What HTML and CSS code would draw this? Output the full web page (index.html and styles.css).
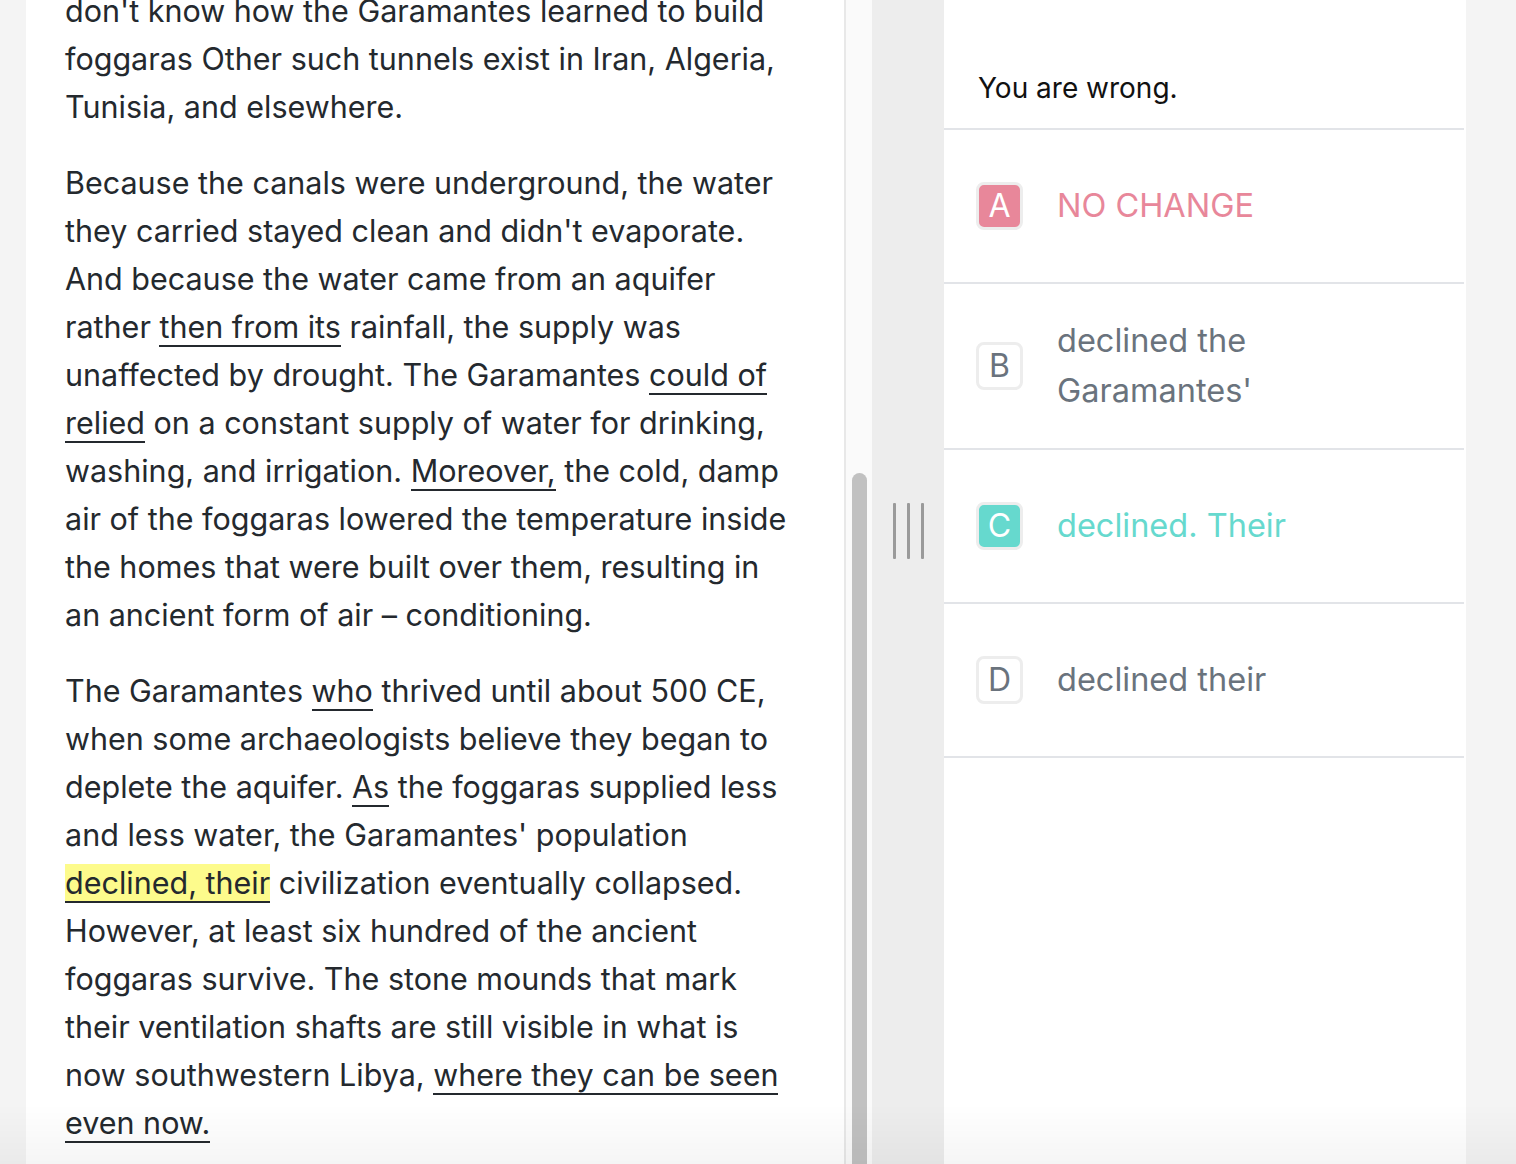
FILE: index.html
```html
<!DOCTYPE html>
<html lang="en">
<head>
<meta charset="utf-8">
<title>Passage question</title>
<link rel="stylesheet" href="styles.css">
</head>
<body>
<div class="app">
  <section class="passage">
    <div class="passage-inner">
      <p>don't know how the Garamantes learned to build foggaras Other such tunnels exist in Iran, Algeria, Tunisia, and elsewhere.</p>
      <p>Because the canals were underground, the water they carried stayed clean and didn't evaporate. And because the water came from an aquifer rather <span class="ul">then from its</span> rainfall, the supply was unaffected by drought. The Garamantes <span class="ul">could of relied</span> on a constant supply of water for drinking, washing, and irrigation. <span class="ul">Moreover,</span> the cold, damp air of the foggaras lowered the temperature inside the homes that were built over them, resulting in an ancient form of air – conditioning.</p>
      <p>The Garamantes <span class="ul">who</span> thrived until about 500 CE, when some archaeologists believe they began to deplete the aquifer. <span class="ul">As</span> the foggaras supplied less and less water, the Garamantes' population <span class="ul hl">declined, their</span> civilization eventually collapsed. However, at least six hundred of the ancient foggaras survive. The stone mounds that mark their ventilation shafts are still visible in what is now southwestern Libya, <span class="ul">where they can be seen even now.</span></p>
    </div>
  </section>
  <div class="scrollbar"><div class="thumb"></div></div>
  <div class="divider">
    <div class="handle"><span></span><span></span><span></span></div>
  </div>
  <section class="question">
    <div class="verdict">You are wrong.</div>
    <div class="option wrong">
      <span class="letter">A</span>
      <span class="text">NO CHANGE</span>
    </div>
    <div class="option">
      <span class="letter">B</span>
      <span class="text">declined the<br>Garamantes'</span>
    </div>
    <div class="option right">
      <span class="letter">C</span>
      <span class="text">declined. Their</span>
    </div>
    <div class="option">
      <span class="letter">D</span>
      <span class="text">declined their</span>
    </div>
  </section>
</div>
<div class="fade"></div>
</body>
</html>
```
FILE: styles.css
```css
* { box-sizing: border-box; }
html, body { margin: 0; height: 100%; }
body {
  background: #f4f4f4;
  font-family: Inter, "Noto Sans", sans-serif;
  overflow: hidden;
}
.app {
  display: flex;
  height: 100vh;
  padding-left: 26px;
}
.passage {
  width: 818px;
  flex: none;
  background: #fff;
  overflow: hidden;
  padding: 0 41px 0 39px;
}
.passage-inner {
  margin-top: -13px;
  color: #24292e;
  font-size: 30.5px;
  line-height: 48px;
}
.passage-inner p { margin: 0 0 28px; }
.ul { border-bottom: 2px solid #24292e; }
.hl { background: #fdfb8c; }
.scrollbar {
  width: 28px;
  flex: none;
  background: #fafafa;
  border-left: 2px solid #e8e8e8;
  padding: 473px 0 0 6px;
}
.thumb {
  width: 15px;
  height: 100%;
  background: #c1c1c1;
  border-radius: 8px 8px 0 0;
}
.divider {
  width: 72px;
  flex: none;
  background: #ededed;
  padding-top: 503px;
}
.handle {
  display: flex;
  justify-content: center;
  gap: 11px;
}
.handle span {
  width: 3px;
  height: 56px;
  background: #9a9a9a;
  border-radius: 1px;
}
.question {
  width: 522px;
  flex: none;
  background: #fff;
  padding-right: 2px;
}
.verdict {
  height: 130px;
  padding: 70px 0 0 34px;
  font-size: 28px;
  line-height: 36px;
  color: #111;
  border-bottom: 2px solid #e2e4e8;
}
.option {
  display: flex;
  align-items: center;
  min-height: 154px;
  padding: 32px 0 32px 32px;
  border-bottom: 2px solid #e2e4e8;
  color: #6a737d;
}
.letter {
  width: 47px;
  height: 48px;
  flex: none;
  border: 3px solid #ededed;
  border-radius: 8px;
  background: #fff;
  display: flex;
  align-items: center;
  justify-content: center;
  font-size: 32px;
  line-height: 1;
}
.text {
  margin-left: 34px;
  font-size: 32.5px;
  line-height: 50px;
}
.wrong { color: #e8879a; }
.wrong .letter { background: #e8879a; color: #fff; }
.right { color: #66d9ce; }
.right .letter { background: #66d9ce; color: #fff; }
.fade {
  position: fixed;
  left: 0;
  right: 0;
  bottom: 0;
  height: 60px;
  background: linear-gradient(rgba(0,0,0,0), rgba(0,0,0,0.04));
  pointer-events: none;
}
```
